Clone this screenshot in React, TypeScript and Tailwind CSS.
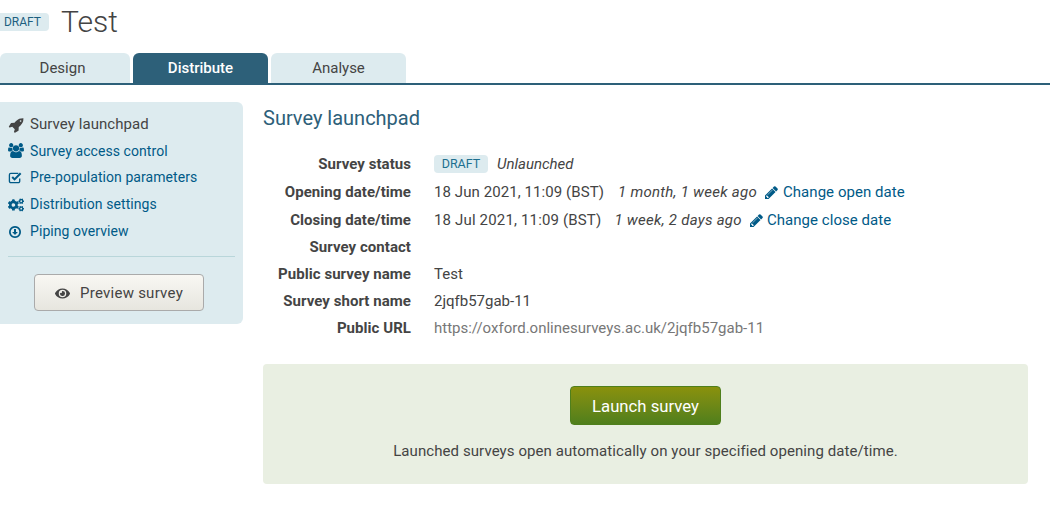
import { FaCogs, FaEye } from "react-icons/fa";

type IconProps = { className?: string };

function RocketIcon({ className }: IconProps) {
  return (
    <svg viewBox="0 0 1792 1792" className={className} fill="currentColor">
      <path d="M1504 448q0-40-28-68t-68-28-68 28-28 68 28 68 68 28 68-28 28-68zm224-288q0 249-75.500 430.500t-253.500 360.500q-81 80-195 176l-20 379q-2 16-16 26l-384 224q-7 4-16 4-12 0-23-9l-64-64q-13-14-8-32l85-276-281-281-276 85q-3 1-9 1-14 0-23-9l-64-64q-17-19-5-39l224-384q10-14 26-16l379-20q96-114 176-195 188-187 358-258t431-71q14 0 24 9.500t10 22.500z" />
    </svg>
  );
}

function UsersIcon({ className }: IconProps) {
  return (
    <svg viewBox="0 128 1920 1664" className={className} fill="currentColor">
      <path d="M593 896q-162 5-265 128h-134q-82 0-138-40.500t-56-118.500q0-353 124-353 6 0 43.500 21t97.500 42.500 119 21.500q67 0 133-23-5 37-5 66 0 139 81 256zm1071 637q0 120-73 189.500t-194 69.500h-874q-121 0-194-69.500t-73-189.500q0-53 3.500-103.500t14-109 26.500-108.500 43-97.500 62-81 85.500-53.500 111.500-20q10 0 43 21.500t73 48 107 48 135 21.500 135-21.500 107-48 73-48 43-21.500q61 0 111.500 20t85.500 53.500 62 81 43 97.500 26.500 108.500 14 109 3.500 103.500zm-1024-1277q0 106-75 181t-181 75-181-75-75-181 75-181 181-75 181 75 75 181zm704 384q0 159-112.500 271.500t-271.500 112.500-271.500-112.500-112.500-271.500 112.500-271.500 271.500-112.500 271.500 112.500 112.500 271.500zm576 225q0 78-56 118.500t-138 40.500h-134q-103-123-265-128 81-117 81-256 0-29-5-66 66 23 133 23 59 0 119-21.500t97.500-42.500 43.500-21q124 0 124 353zm-128-609q0 106-75 181t-181 75-181-75-75-181 75-181 181-75 181 75 75 181z" />
    </svg>
  );
}

function CheckSquareIcon({ className }: IconProps) {
  return (
    <svg viewBox="0 0 16 16" className={className} fill="none" stroke="currentColor">
      <path d="M12.500 9v3a1.500 1.500 0 0 1-1.500 1.500H3A1.500 1.500 0 0 1 1.500 12V5A1.500 1.500 0 0 1 3 3.500h8" strokeWidth="1.400" />
      <path d="M4.500 7.500l2.500 2.500 6.500-6.500" strokeWidth="2.200" />
    </svg>
  );
}

function ArrowCircleIcon({ className }: IconProps) {
  return (
    <svg viewBox="0 0 1536 1536" className={className} fill="currentColor">
      <path d="M1120 784q0 12-10 24l-319 319q-11 9-23 9t-23-9l-320-320q-15-16-7-35 8-20 30-20h192v-352q0-14 9-23t23-9h192q14 0 23 9t9 23v352h192q14 0 23 9t9 23zm-352-560q-148 0-273 73t-198 198-73 273 73 273 198 198 273 73 273-73 198-198 73-273-73-273-198-198-273-73zm768 544q0 209-103 385.500t-279.500 279.500-385.500 103-385.500-103-279.500-279.500-103-385.500 103-385.500 279.500-279.500 385.500-103 385.500 103 279.500 279.500 103 385.500z" fillRule="evenodd" />
    </svg>
  );
}

function PencilIcon({ className }: IconProps) {
  return (
    <svg viewBox="128 128 1536 1536" className={className} fill="currentColor">
      <path d="M491 1536l91-91-235-235-91 91v107h128v128h107zm523-928q0-22-22-22-10 0-17 7l-542 542q-7 7-7 17 0 22 22 22 10 0 17-7l542-542q7-7 7-17zm-54-192l416 416-832 832h-416v-416zm683 96q0 53-37 90l-166 166-416-416 166-165q36-38 90-38 53 0 91 38l235 234q37 39 37 91z" />
    </svg>
  );
}

const NAV_ITEMS = [
  { label: "Survey launchpad", icon: RocketIcon, active: true, h: "h-[27px]", size: "size-[16px]" },
  { label: "Survey access control", icon: UsersIcon, active: false, h: "h-[26px]", size: "size-[16px]" },
  { label: "Pre-population parameters", icon: CheckSquareIcon, active: false, h: "h-[27px]", size: "size-[15px]" },
  { label: "Distribution settings", icon: FaCogs, active: false, h: "h-[27px]", size: "size-[16px]" },
  { label: "Piping overview", icon: ArrowCircleIcon, active: false, h: "h-[27px]", size: "size-[12px] ml-[1px]" },
];

const TABS = [
  { label: "Design", className: "w-[130px] bg-[#ddebef] pr-[5px] text-[#444] font-normal" },
  { label: "Distribute", className: "w-[135px] bg-[#2d6079] text-white font-medium" },
  { label: "Analyse", className: "w-[135px] bg-[#ddebef] text-[#444] font-normal" },
];

function Row({ label, h, children }: { label: string; h: string; children?: React.ReactNode }) {
  return (
    <div className={`flex items-center ${h}`}>
      <div className="w-[148px] shrink-0 text-right font-bold tracking-[0.05px] text-[#444]">{label}</div>
      <div className="ml-[23px] flex items-center whitespace-nowrap text-[#444]">{children}</div>
    </div>
  );
}

export default function App() {
  return (
    <div className="h-[505px] w-[1050px] overflow-hidden bg-white font-['Roboto',sans-serif] text-[15px] text-[#444]">
      <div className="flex h-[53px] items-start">
        <span className="mt-[13px] flex h-[18px] w-[49px] items-center justify-end rounded-r-[4px] bg-[#ddebef] pr-[8px] pb-[1px] text-[12px] text-[#1d5f7f]">
          DRAFT
        </span>
        <h1 className="ml-[12px] mt-[3px] text-[30px] font-light leading-[38px] text-[#444]">Test</h1>
      </div>

      <div className="flex h-[32px] gap-[3px] border-b-2 border-[#2d6079]">
        {TABS.map((t) => (
          <div key={t.label} className={`flex h-[30px] items-center justify-center rounded-t-[6px] pt-[1px] ${t.className}`}>
            {t.label}
          </div>
        ))}
      </div>

      <div className="flex pt-[17px]">
        <aside className="h-[222px] w-[243px] shrink-0 rounded-r-[6px] bg-[#ddebef] pt-[9px]">
          <nav className="flex flex-col px-[8px]">
            {NAV_ITEMS.map(({ label, icon: Icon, active, h, size }) => (
              <div
                key={label}
                className={`flex items-center tracking-[0.07px] ${h} ${active ? "text-[15px] text-[#444]" : "text-[14px] text-[#005a87]"}`}
              >
                <span className="flex w-[22px] shrink-0 items-center">
                  <Icon className={size} />
                </span>
                {label}
              </div>
            ))}
          </nav>
          <div className="mx-[8px] mt-[11px] border-t border-[#b9d6da]" />
          <div className="mt-[17px] pl-[34px]">
            <button className="flex h-[37px] w-[170px] items-center justify-center gap-[10px] rounded-[4px] border border-[#aaa] bg-gradient-to-b from-[#f8f7f3] to-[#e7e6df] pt-[2px] text-[15px] tracking-[0.25px] text-[#444]">
              <FaEye className="size-[15px]" />
              Preview survey
            </button>
          </div>
        </aside>

        <main className="ml-[20px] w-[765px]">
          <h2 className="mt-[2px] text-[20px] leading-[28px] text-[#2d6079]">Survey launchpad</h2>

          <div className="mt-[18px]">
            <Row label="Survey status" h="h-[28px]">
              <span className="flex h-[18px] w-[54px] items-center justify-center rounded-[4px] bg-[#ddebef] text-[12.5px] text-[#1d6f8f]">
                DRAFT
              </span>
              <em className="ml-[9px]">Unlaunched</em>
            </Row>
            <Row label="Opening date/time" h="h-[28px]">
              <span className="tracking-[0.08px]">18 Jun 2021, 11:09 (BST)</span>
              <em className="ml-[14px] tracking-[0.26px]">1 month, 1 week ago</em>
              <span className="ml-[8px] flex items-center gap-[5px] tracking-[0.05px] text-[#005a87]">
                <PencilIcon className="size-[13px]" />
                Change open date
              </span>
            </Row>
            <Row label="Closing date/time" h="h-[28px]">
              <span className="tracking-[0.16px]">18 Jul 2021, 11:09 (BST)</span>
              <em className="ml-[13px] tracking-[0.28px]">1 week, 2 days ago</em>
              <span className="ml-[8px] flex items-center gap-[4px] tracking-[0.05px] text-[#005a87]">
                <PencilIcon className="size-[13px]" />
                Change close date
              </span>
            </Row>
            <Row label="Survey contact" h="h-[27px]" />
            <Row label="Public survey name" h="h-[27px]">Test</Row>
            <Row label="Survey short name" h="h-[27px]">2jqfb57gab-11</Row>
            <Row label="Public URL" h="h-[27px]">
              <span className="text-[#777]">https://oxford.onlinesurveys.ac.uk/2jqfb57gab-11</span>
            </Row>
          </div>

          <div className="mt-[22px] flex h-[120px] flex-col items-center rounded-[4px] bg-[#e9efe2] pt-[22px]">
            <button className="flex h-[39px] w-[151px] items-center justify-center rounded-[4px] border border-[#4f7f1c] bg-gradient-to-b from-[#8a910c] to-[#4f7f1c] pt-[2px] text-[16.7px] text-white">
              Launch survey
            </button>
            <p className="mt-[16px] leading-[20px] tracking-[0.08px] text-[#444]">
              Launched surveys open automatically on your specified opening date/time.
            </p>
          </div>
        </main>
      </div>
    </div>
  );
}
